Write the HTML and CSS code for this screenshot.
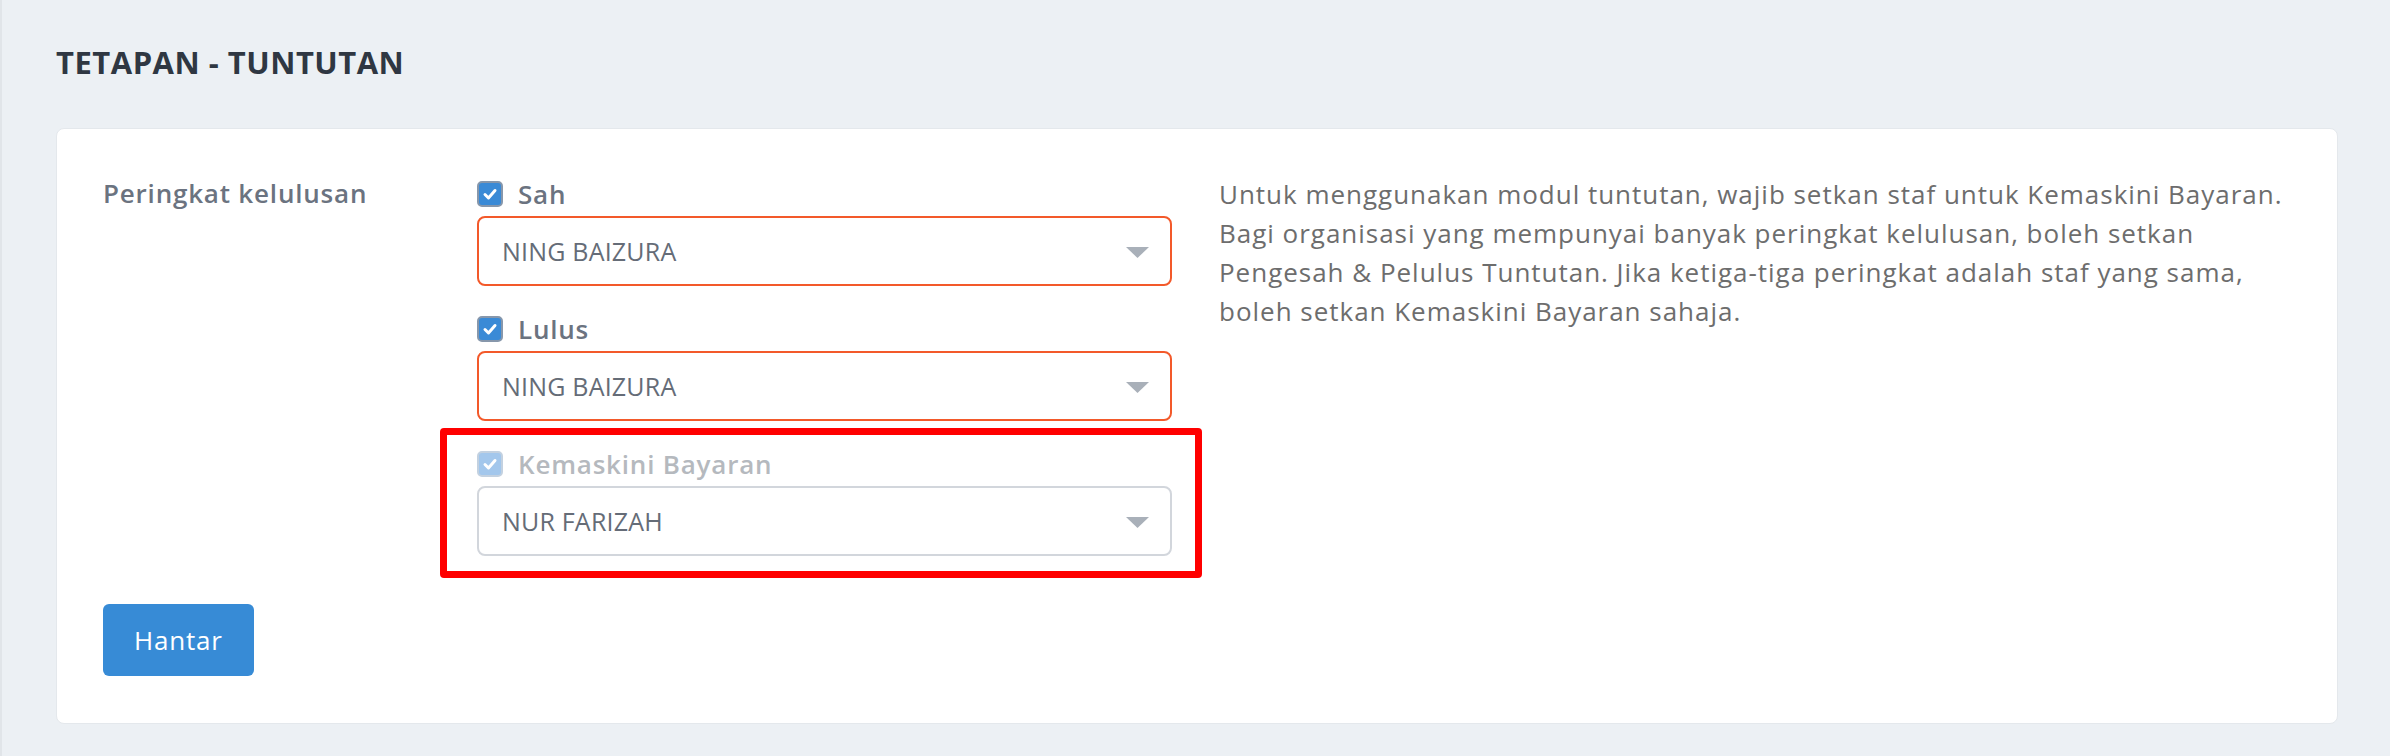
FILE: index.html
```html
<!DOCTYPE html>
<html lang="ms">
<head>
  <meta charset="UTF-8">
  <meta name="viewport" content="width=device-width, initial-scale=1">
  <title>Tetapan - Tuntutan</title>
  <link rel="stylesheet" href="styles.css">
</head>

<body>

<div class="page">
  <h1 class="page-title">TETAPAN - TUNTUTAN</h1>

  <div class="card">
    <div class="setting-row">
      <div class="setting-label">Peringkat kelulusan</div>

      <div class="setting-fields">
        <div class="field-group">
          <label class="check">
            <span class="check-box"><svg viewBox="0 0 22 22"><polyline points="6,11.5 9.5,15 16,7.5"/></svg></span>
            Sah
          </label>
          <div class="select-wrap">
            <select class="select-input invalid">
              <option>NING BAIZURA</option>
            </select>
            <svg class="caret" viewBox="0 0 23 11"><polygon points="0,0 23,0 11.5,11"/></svg>
          </div>
        </div>

        <div class="field-group">
          <label class="check">
            <span class="check-box"><svg viewBox="0 0 22 22"><polyline points="6,11.5 9.5,15 16,7.5"/></svg></span>
            Lulus
          </label>
          <div class="select-wrap">
            <select class="select-input invalid">
              <option>NING BAIZURA</option>
            </select>
            <svg class="caret" viewBox="0 0 23 11"><polygon points="0,0 23,0 11.5,11"/></svg>
          </div>
        </div>

        <div class="field-group highlighted">
          <label class="check disabled">
            <span class="check-box"><svg viewBox="0 0 22 22"><polyline points="6,11.5 9.5,15 16,7.5"/></svg></span>
            Kemaskini Bayaran
          </label>
          <div class="select-wrap">
            <select class="select-input">
              <option>NUR FARIZAH</option>
            </select>
            <svg class="caret" viewBox="0 0 23 11"><polygon points="0,0 23,0 11.5,11"/></svg>
          </div>
        </div>
      </div>

      <p class="setting-help">
        Untuk menggunakan modul tuntutan, wajib setkan staf untuk Kemaskini Bayaran.<br>
        Bagi organisasi yang mempunyai banyak peringkat kelulusan, boleh setkan<br>
        Pengesah &amp; Pelulus Tuntutan. Jika ketiga-tiga peringkat adalah staf yang sama,<br>
        boleh setkan Kemaskini Bayaran sahaja.
      </p>
    </div>

    <button class="btn-submit">Hantar</button>
  </div>
</div>

</body>
</html>
```

FILE: styles.css
```css
body {
  margin: 0;
  font-family: "Open Sans", "Noto Sans", sans-serif;
  background: #ecf0f4;
}
.page {
  min-height: 100vh;
  box-sizing: border-box;
  border-left: 2px solid #e1e5e9;
  padding: 42px 52px 33px 54px;
}
.page-title {
  margin: 0 0 46px;
  font-size: 31px;
  line-height: 40px;
  font-weight: 700;
  letter-spacing: 0.5px;
  color: #2f3742;
}
.card {
  background: #fff;
  border: 1px solid #e4e8ec;
  border-radius: 8px;
  padding: 45px 47px 47px 46px;
}
.setting-row {
  display: grid;
  grid-template-columns: 374px 695px 1fr;
}
.setting-label {
  font-size: 26px;
  line-height: 39px;
  font-weight: 600;
  letter-spacing: 0.8px;
  color: #6b7380;
}
.setting-fields {
  display: flex;
  flex-direction: column;
  gap: 23px;
}
.check {
  display: flex;
  align-items: center;
  gap: 15px;
  height: 39px;
  font-size: 26px;
  font-weight: 600;
  letter-spacing: 0.8px;
  color: #6b7380;
}
.check-box {
  display: block;
  width: 26px;
  height: 26px;
  box-sizing: border-box;
  border: 2px solid #8797ab;
  border-radius: 5px;
  background: #3a8ad6;
}
.check-box svg {
  display: block;
  width: 22px;
  height: 22px;
  fill: none;
  stroke: #fff;
  stroke-width: 3;
  stroke-linecap: round;
  stroke-linejoin: round;
}
.check.disabled {
  color: #b5b9be;
}
.check.disabled .check-box {
  border-color: #c3d1e0;
  background: #a3c7ec;
}
.select-wrap {
  position: relative;
  margin-top: 3px;
}
.select-input {
  appearance: none;
  -webkit-appearance: none;
  display: block;
  width: 100%;
  height: 70px;
  box-sizing: border-box;
  border: 2px solid #d2d6dc;
  border-radius: 8px;
  padding: 0 60px 0 23px;
  background: #fff;
  font-family: inherit;
  font-size: 25px;
  letter-spacing: 0.2px;
  color: #656c77;
}
.select-input.invalid {
  border-color: #f3592a;
}
.caret {
  position: absolute;
  right: 23px;
  top: 31px;
  width: 23px;
  height: 11px;
  fill: #a9b0b9;
  pointer-events: none;
}
.highlighted {
  position: relative;
}
.highlighted::after {
  content: "";
  position: absolute;
  left: -37px;
  right: -30px;
  top: -16px;
  bottom: -22px;
  border: 7px solid #ff0000;
  border-radius: 4px;
  pointer-events: none;
}
.setting-help {
  margin: 1px 0 0;
  padding-left: 47px;
  font-size: 26px;
  line-height: 39px;
  letter-spacing: 0.98px;
  color: #6d6d6d;
}
.btn-submit {
  display: block;
  margin-top: 48px;
  height: 72px;
  padding: 0 31px;
  border: none;
  border-radius: 6px;
  background: #378bd6;
  color: #fff;
  font-family: inherit;
  font-size: 26px;
  font-weight: 500;
  letter-spacing: 0.8px;
  cursor: pointer;
}
```
